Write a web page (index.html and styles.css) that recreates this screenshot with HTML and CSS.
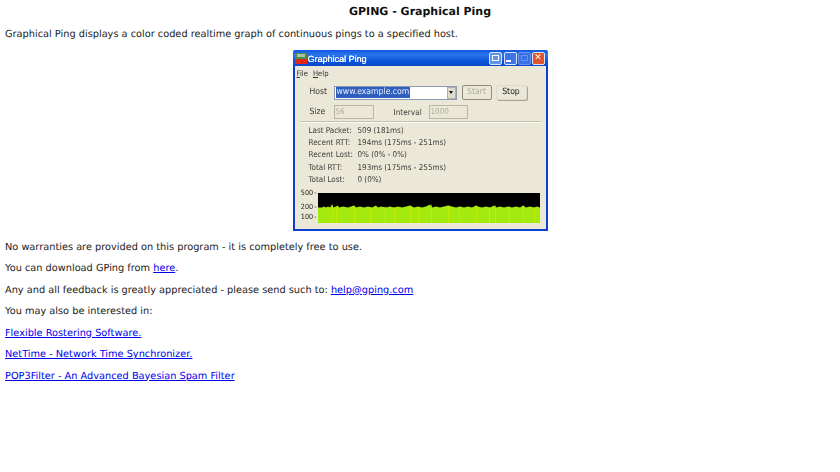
FILE: index.html
```html
<!DOCTYPE html>
<html lang="en">
<head>
<meta charset="utf-8">
<title>GPING - Graphical Ping</title>
<link rel="stylesheet" href="styles.css">
</head>
<body>
<h1 class="title">GPING - Graphical Ping</h1>
<p class="para">Graphical Ping displays a color coded realtime graph of continuous pings to a specified host.</p>
<div class="shot-row">
  <div class="win">
    <div class="titlebar">
      <svg class="appicon" width="12" height="11" viewBox="0 0 12 11"><rect width="12" height="11" fill="#4f8a50"/><rect y="6" width="12" height="5" fill="#e02818"/><rect x="2" y="1" width="8" height="3" fill="#a8c8a0"/></svg>
      <span class="wintitle">Graphical Ping</span>
      <span class="tb tb-blue tb-sys"><i class="sysglyph"></i></span>
      <span class="tb tb-blue tb-gap"><i class="minglyph"></i></span>
      <span class="tb tb-blue tb-dim"><i class="maxglyph"></i></span>
      <span class="tb tb-close">✕</span>
    </div>
    <div class="client">
      <div class="menu"><span class="menuitem"><u>F</u>ile</span><span class="menuitem"><u>H</u>elp</span></div>
      <div class="form-row row-host">
        <span class="lbl">Host</span>
        <span class="combo"><span class="combotext"><span class="sel">www.example.com</span></span><span class="arrow"><i></i></span></span>
        <span class="btn btn-off">Start</span>
        <span class="btn">Stop</span>
      </div>
      <div class="form-row row-size">
        <span class="lbl">Size</span>
        <span class="field field-size">56</span>
        <span class="lbl lbl-int">Interval</span>
        <span class="field field-int">1000</span>
      </div>
      <div class="sep"></div>
      <div class="stats">
        <span>Last Packet:</span><span>509 (181ms)</span>
        <span>Recent RTT:</span><span>194ms (175ms - 251ms)</span>
        <span>Recent Lost:</span><span>0% (0% - 0%)</span>
        <span>Total RTT:</span><span>193ms (175ms - 255ms)</span>
        <span>Total Lost:</span><span>0 (0%)</span>
      </div>
      <div class="graph-row">
        <div class="axis"><span>500 -</span><span class="ax200">200 -</span><span class="ax100">100 -</span></div>
        <svg class="graph" width="222" height="30" viewBox="0 0 222 31" preserveAspectRatio="none">
          <rect width="222" height="31" fill="#000"/>
          <path fill="#a4ea0e" d="M0 15L4 15 6 14 8 15 10 14 12 15 14 12 15 15 18 14 20 13 21 15 25 14 30 15 33 14 36 13 38 15 42 14 46 15 50 14 54 15 58 13 60 15 63 14 68 15 72 14 76 15 80 14 84 15 88 14 92 13 96 15 100 14 104 15 108 14 112 12 114 15 118 14 122 15 126 14 130 13 134 14 138 15 142 14 146 15 150 14 154 15 158 13 160 14 164 15 168 14 172 15 176 13 178 15 182 14 186 15 190 14 194 15 198 14 202 15 205 13 208 15 212 14 216 15 219 14 222 15V31H0Z"/>
          <path stroke="#dcf000" stroke-width="1" opacity=".6" d="M14.5 12V31M18.5 14V31M36.5 13V31M52.5 15V31M67.5 14V31M76.5 15V31M92.5 13V31M100.5 15V31M113.5 12V31M130.5 13V31M141.5 14V31M158.5 13V31M171.5 15V31M177.5 13V31M191.5 14V31M205.5 13V31M216.5 15V31"/>
        </svg>
      </div>
    </div>
  </div>
</div>
<p class="para">No warranties are provided on this program - it is completely free to use.</p>
<p class="para">You can download GPing from <a href="#">here</a>.</p>
<p class="para">Any and all feedback is greatly appreciated - please send such to: <a href="#">help@gping.com</a></p>
<p class="para">You may also be interested in:</p>
<p class="para"><a href="#">Flexible Rostering Software.</a></p>
<p class="para"><a href="#">NetTime - Network Time Synchronizer.</a></p>
<p class="para"><a href="#">POP3Filter - An Advanced Bayesian Spam Filter</a></p>
</body>
</html>
```
FILE: styles.css
```css
html, body { margin: 0; padding: 0; background: #fff; }
body {
  padding: 5px;
  font-family: "DejaVu Sans", sans-serif;
  font-size: 9.78px;
  line-height: 13px;
  color: #222;
  text-rendering: geometricPrecision;
}
.title {
  margin: 0 0 9px;
  text-align: center;
  font-size: 11px;
  line-height: 14px;
  font-weight: bold;
  color: #111;
}
.para { margin: 0 0 8.5px; }
a { color: #0000ee; }
.shot-row { display: flex; justify-content: center; margin: 9px 0 9.5px; }
.win {
  width: 255px;
  height: 181px;
  box-sizing: border-box;
  background: #0a3fd0;
  border-radius: 3px 3px 0 0;
  padding: 0 2px 2px;
  display: flex;
  flex-direction: column;
  font-family: "DejaVu Sans Condensed", "Liberation Sans", sans-serif;
  font-size: 8px;
  color: #3c3c38;
  overflow: hidden;
  filter: blur(0.25px);
}
.titlebar {
  flex: none;
  height: 16px;
  margin: 0 -2px;
  padding: 0 2px;
  display: flex;
  align-items: center;
  background: linear-gradient(#0f58e0, #2a74ea 30%, #0b52dc 70%, #0a48c8);
}
.appicon { flex: none; }
.wintitle { margin-left: 1px; padding-top: 2px; flex: 1; color: #fff; font-family: "Liberation Sans", sans-serif; font-size: 9px; text-shadow: 0.3px 0 #fff; }
.tb {
  flex: none;
  width: 13px;
  height: 13px;
  box-sizing: border-box;
  border: 1px solid #d8e4fa;
  border-radius: 2px;
  margin-left: 2px;
  display: flex;
  align-items: center;
  justify-content: center;
}
.tb-blue { background: #3f74e8; }
.tb-sys { margin-right: 2px; background: #5f95e8; }
.tb-gap { margin-left: 0; }
.tb-dim { background: #3a70e6; border-color: #6a92ea; margin-left: 1px; }
.tb-close { background: #e0542c; color: #fff; font-size: 9px; font-weight: bold; margin-right: 1px; margin-left: 1px; line-height: 1; font-family: "DejaVu Sans", sans-serif; }
.sysglyph { display: block; width: 7px; height: 6px; border: 1px solid #fff; box-sizing: border-box; }
.minglyph { display: block; width: 5px; height: 2px; background: #fff; margin: 6px 3px 0 0; }
.maxglyph { display: block; width: 7px; height: 6px; border: 1px solid #6a92ea; box-sizing: border-box; }
.client { flex: 1; background: #ebe8d8; min-height: 0; display: flex; flex-direction: column; }
.menu { height: 13px; padding: 1px 0 0 2px; display: flex; gap: 5px; font-size: 7.6px; color: #333; box-sizing: border-box; align-items: center; }
.form-row { display: flex; align-items: center; }
.row-host { height: 15px; margin-top: 6px; padding-left: 15px; }
.row-size { height: 14px; margin-top: 5px; padding-left: 15px; }
.lbl { width: 24px; font-size: 8.6px; flex: none; }
.lbl-int { width: 35px; margin-left: 20px; font-size: 8.2px; }
.combo {
  width: 123px;
  height: 14px;
  flex: none;
  box-sizing: border-box;
  border: 1px solid #8c9cb8;
  background: #fff;
  display: flex;
  align-items: center;
  padding-left: 1px;
}
.combotext { flex: 1; color: #e8eefa; font-size: 8.6px; }
.sel { background: #2f5fbe; display: inline-block; line-height: 11px; padding: 0 1px; }
.arrow { width: 9px; height: 12px; background: #e0dccc; border: 1px solid #b4b0a0; box-sizing: border-box; display: flex; align-items: center; justify-content: center; }
.arrow i { display: block; width: 0; height: 0; border: 2.5px solid transparent; border-top: 3px solid #111; border-bottom: 0; }
.btn {
  width: 31px;
  height: 15px;
  flex: none;
  margin-left: 4px;
  box-sizing: border-box;
  border: 1px solid #dcdaca;
  border-radius: 2px;
  background: #ebe8d8;
  box-shadow: 1px 1px 0 #a8a490;
  text-align: center;
  line-height: 13px;
  font-size: 8.6px;
  color: #222;
}
.btn-off { width: 30px; color: #b0ae9e; margin-left: 5px; border-color: #8e8c7e; box-shadow: none; }
.field {
  height: 14px;
  flex: none;
  box-sizing: border-box;
  border: 1px solid #b8b6a4;
  background: #ebe8d8;
  color: #aeac9c;
  font-size: 8px;
  line-height: 12px;
  padding-left: 1px;
}
.field-size { width: 40px; }
.field-int { width: 39px; }
.sep { height: 1px; background: #c4c1b0; margin: 2px 5px 0; flex: none; box-shadow: 0 1px 0 #fbfaf2; }
.stats {
  display: grid;
  grid-template-columns: 49px auto;
  justify-content: start;
  grid-auto-rows: 12.2px;
  line-height: 12px;
  padding: 3px 0 0 14px;
}
.graph-row { display: flex; margin-top: 7px; padding-left: 6px; }
.axis { width: 17px; margin-top: -4px; display: flex; flex-direction: column; font-size: 7.2px; word-spacing: -1px; line-height: 8px; color: #222; text-align: right; white-space: nowrap; padding-right: 1px; box-sizing: border-box; }
.ax200 { margin-top: 6px; }
.ax100 { margin-top: 2px; }
.graph { display: block; flex: none; }
```
